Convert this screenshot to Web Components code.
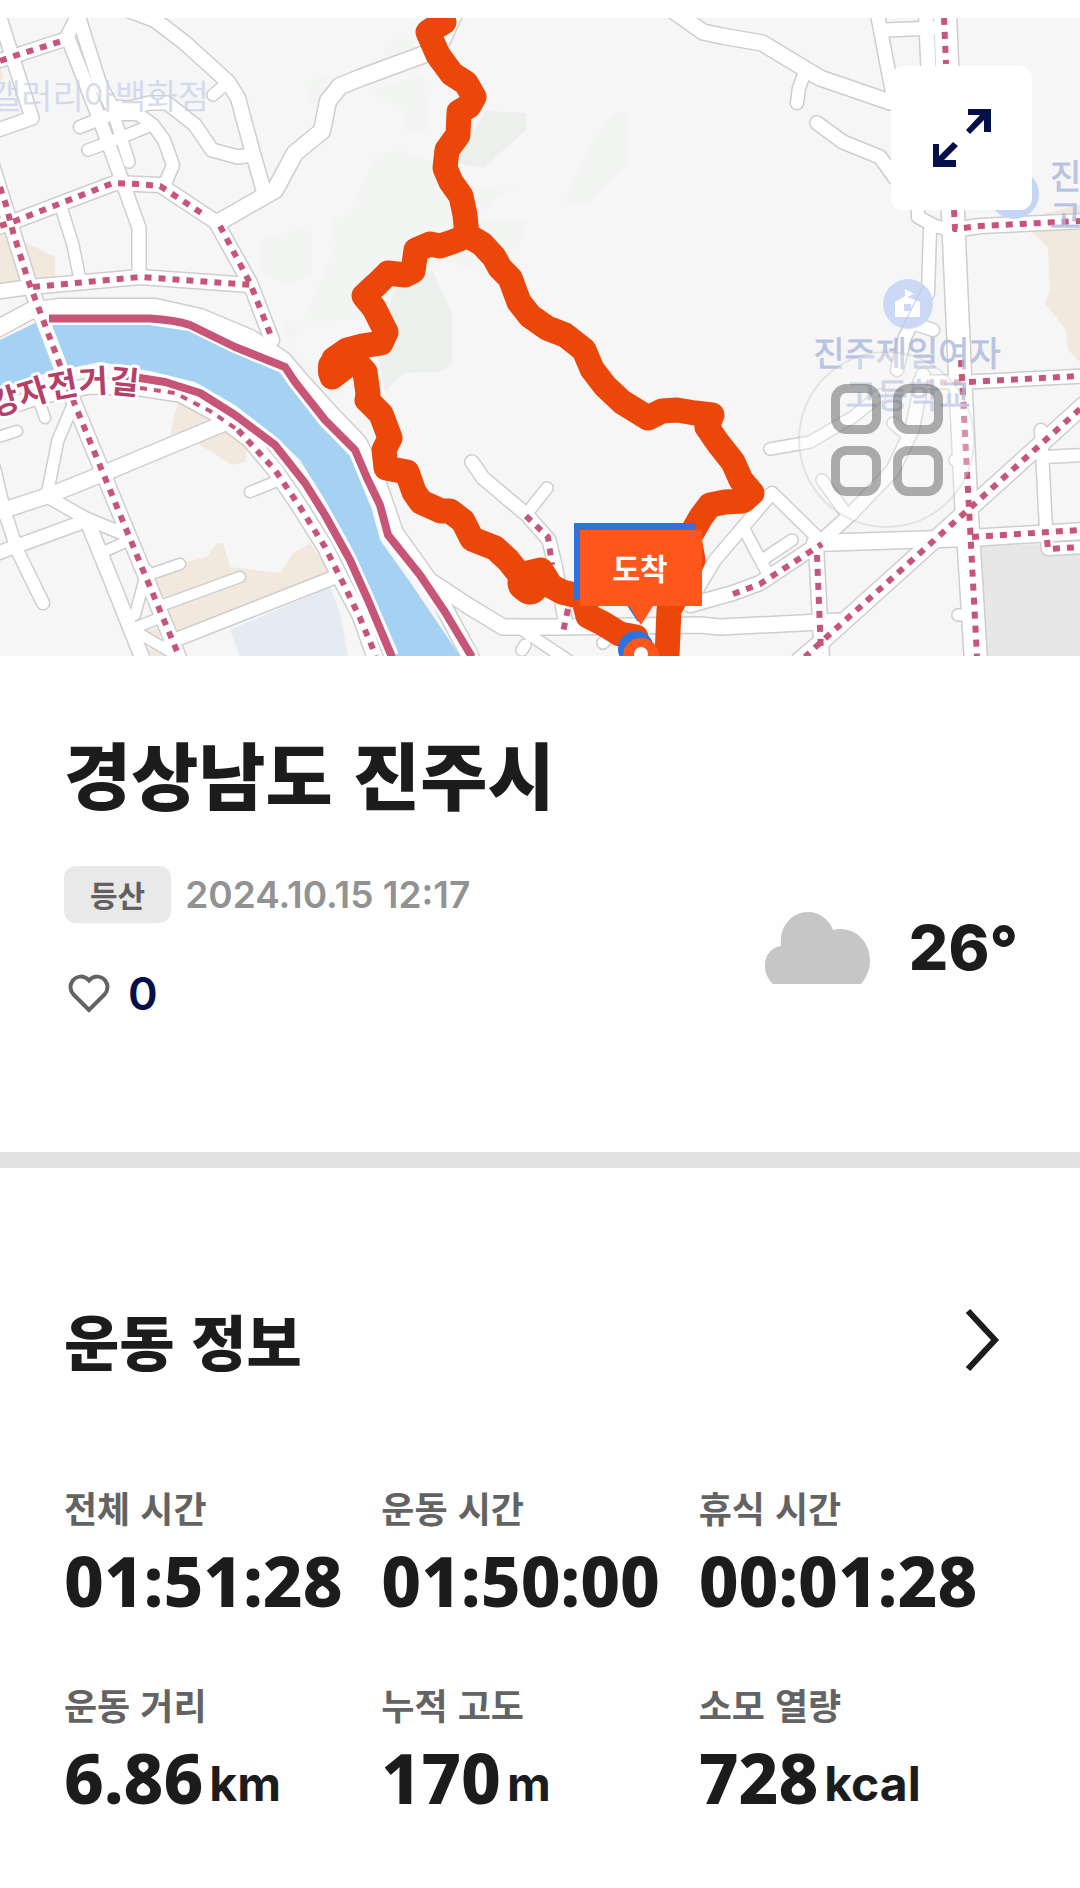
<!DOCTYPE html>
<html lang="ko">
<head>
<meta charset="utf-8">
<meta name="viewport" content="width=device-width, initial-scale=1">
<title>운동 기록</title>
<style>
  body { margin: 0; background: #fefefe; color: #1c1c1c; font-family: Inter, "Noto Sans CJK KR", sans-serif; }
</style>
</head>
<body>
<workout-page></workout-page>

<template id="t-page">
  <style>
    :host { display: block; padding-top: 18px; }
    hr { margin: 0; border: 0; height: 16px; background: #e2e2e2; }
  </style>
  <main>
    <route-map></route-map>
    <workout-summary></workout-summary>
    <hr>
    <workout-info></workout-info>
  </main>
</template>

<template id="t-map">
  <style>
    :host { display: block; position: relative; overflow: hidden; background: #f6f6f6; }
    svg { display: block; }
    .map { width: 100%; height: auto; font-family: "Noto Sans CJK KR", sans-serif; }
    .case path { fill: none; stroke: #cecece; stroke-linecap: round; stroke-linejoin: round; }
    .fill path { fill: none; stroke: #fff; stroke-linecap: round; stroke-linejoin: round; }
    .dots path { fill: none; stroke: #c75577; stroke-width: 6; stroke-dasharray: 7 7; stroke-linejoin: round; }
    .dots .thin { stroke-width: 4; }
    .poi { font-size: 34px; fill: #a9b7dd; fill-opacity: .75; stroke: #a9b7dd; stroke-opacity: .6; stroke-width: 1; }
    .poi .faint { fill: #c9d1ea; stroke: none; }
    button { position: absolute; border: 0; padding: 0; display: grid; place-items: center; cursor: pointer; }
    .expand { top: 48px; right: 48px; width: 141px; height: 144px; border-radius: 12px; background: #fff; }
    .menu { top: 333px; right: 105px; width: 177px; height: 177px; border-radius: 50%; border: 2px solid rgba(0,0,0,.08); background: rgba(248,248,248,.35); box-sizing: border-box; }
  </style>
  <svg class="map" viewBox="0 18 1080 638" role="img" aria-label="이동 경로 지도">
    <rect y="18" width="1080" height="638" fill="#f6f6f6"/>
    <g fill="#f1f4f1">
      <path d="M373 88L425 75L427 133L405 133L402 108L380 100ZM259 240L312 225V275L285 285L259 270ZM333 218L360 215V300L340 298L350 262L333 240ZM378 60L395 38L415 40V50ZM375 155L400 150L440 165L460 190L518 184L495 200L480 220H527L520 245L490 275L440 260L400 300L362 320L285 322V340L345 400L310 385L290 350ZM305 80L335 75L328 105L308 105Z" opacity=".55"/>
      <path d="M617 113H628V162L590 203H564L593 140Z"/>
      <path d="M397 287L432 270L452 313V363L440 372L403 373L385 392L375 340Z" fill="#ecf0ed"/>
      <path d="M485 111L526 113V130L483 168L457 163Z" fill="#ecefec"/>
    </g>
    <g fill="#f3e8dd">
      <path d="M0 233L27 243L55 257V277L33 280L0 287Z"/>
      <path d="M0 68L4 76L0 82Z"/>
      <path d="M178 402L213 420L170 437L173 420Z"/>
      <path d="M197 443L227 428L247 450L245 462L232 465L213 453Z"/>
      <path d="M155 580L183 563L207 557L217 543L223 543L230 567L280 573L293 553L310 543L330 573L177 633Z"/>
      <path d="M145 630L160 628V640ZM146 648L175 656H152Z"/>
      <path d="M1045 213L1080 205V362L1068 350L1066 330L1045 303L1050 290L1048 247L1033 233Z"/>
    </g>
    <path d="M230 630L330 587L340 613L348 656H240Z" fill="#e4ebf3"/>
    <path d="M980 546L1080 543V656H984Z" fill="#e7e7e7"/>
    <g class="case"></g>
    <g class="fill"></g>
    <path fill="#a5d1f2" d="M0 340L35 323L150 324L185 329L230 351L280 371L290 385L320 425L350 456L372 510L380 540L410 582L460 656H395L375 603L350 545L325 500L300 460L275 436L235 405L195 382L150 371L100 362L50 372L0 388Z"/>
    <g fill="none" stroke="#fff" stroke-linejoin="round">
      <path stroke-width="14" d="M48 318H150L190 324L235 346L285 367L295 382L325 420L355 450L367 478L380 505L388 535L420 575L445 612L472 656"/>
      <path stroke-width="14" d="M135 377L165 382L200 393L235 415L275 445L305 483L325 515L350 560L368 600L392 656"/>
      <path stroke-width="14" d="M38 308L72 397"/>
    </g>
    <g fill="none" stroke="#c75577" stroke-width="8" stroke-linejoin="round">
      <path d="M49 318.500H150Q175 320 190 325L235 347L285 367L295 382L325 420L355 450L367 478L380 505L388 535L420 575L445 612L472 657"/>
      <path d="M120 376L140 378L165 382L200 393L235 415L275 445L305 483L325 515L350 560L368 600L392 657"/>
    </g>
    <g class="dots">
      <path d="M0 61L14 56L62 41"/>
      <path d="M0 226L15 221L113 183L137 184L160 186L203 214"/>
      <path d="M220 226L250 283L271 336"/>
      <path d="M0 187L6 205L13 232L28 280L45 325L75 405L110 490L145 575L179 656"/>
      <path d="M33 287L140 277L254 285"/>
      <path class="thin" d="M140 388L175 393L210 411L238 430"/>
      <path d="M238 430L275 470L300 507L325 547L345 587L360 618L376 656"/>
      <path d="M944 18L946 64"/>
      <path d="M954 210L955 229L980 226L1080 221"/>
      <path d="M961 360L968 490L977 656"/>
      <path d="M969 382L1080 376"/>
      <path d="M1080 409L970 508L820 643L805 657"/>
      <path d="M972 537L1080 530M1047 540L1048 549L1080 547"/>
      <path d="M733 594L760 584L822 544M817 555L821 653"/>
      <path d="M526 516L548 537L552 565M568 609L563 632"/>
      <path d="M926 383L962 382" opacity=".4"/>
    </g>
    <g>
      <circle cx="908" cy="304" r="25" fill="#cbd9f6"/>
      <circle cx="1014" cy="194" r="25" fill="#c5d5f5"/>
      <path d="M895 302L905 296V289L914 294L907 297L920 302V317H895ZM904 304V311H911V304Z" fill="#fff" fill-rule="evenodd"/>
      <path d="M923 286L902 328" stroke="#bcc5d8" fill="none"/>
    </g>
    <g class="poi">
      <text class="faint" x="-10" y="109">갤러리아백화점</text>
      <text x="907" y="366" text-anchor="middle">진주제일여자</text>
      <text x="908" y="408" text-anchor="middle">고등학교</text>
      <text x="1050" y="189">진</text>
      <text x="1050" y="229">고</text>
    </g>
    <path id="curve" d="M-6 417L28 406Q60 395 90 393T150 398" fill="none"/>
    <text font-size="32" font-weight="700" fill="#b53f69" stroke="#fff" stroke-width="6" stroke-linejoin="round" paint-order="stroke"><textPath href="#curve">강자전거길</textPath></text>
    <g fill="none" stroke="#eb470a" stroke-width="25" stroke-linejoin="round" stroke-linecap="round">
      <path d="M444 22L428 32L438 55L452 74L466 83L474 97L469 106L459 112L458 135L447 150L445 168L451 182L461 196L465 215L467 235L482 244L494 257L500 268L510 278L519 302L530 316L547 328L565 335L574 342L584 350L592 369L605 386L622 402L648 418L662 411L677 410L695 413L712 415L707 427L718 443L733 462L741 480L752 493L743 501L725 502L710 505L701 517L689 538L693 560L680 590L669 610L667 656"/>
      <path d="M467 236L452 242L440 246L430 244L416 250L413 271L405 275L388 273L378 283L364 296L374 308L386 332L381 343L362 346L347 350L334 359L332 377L354 360L365 372L368 394L367 400L381 414L390 438L384 450L386 468L407 472L414 492L421 502L441 511L450 511L463 521L472 539L495 548L508 560L520 575L541 570L551 586L562 592L583 597L588 616L602 623L620 634L636 637"/>
      <path d="M526 583L530 586" stroke-width="37"/>
      <path d="M333 366L333 372" stroke-width="30"/>
    </g>
    <circle cx="636" cy="649" r="18" fill="#2b74df"/>
    <path d="M626 604L652 604L638 622Z" fill="#2b74df"/>
    <rect x="574" y="523" width="122" height="77" fill="#2b74df"/>
    <path d="M580 530H702V606H653L641 625L629 606H580Z" fill="#ff561c"/>
    <circle cx="641" cy="656" r="18" fill="#ff561c"/>
    <circle cx="641" cy="654" r="7" fill="#fff"/>
    <text x="640" y="580" text-anchor="middle" font-size="30" font-weight="700" fill="#fff">도착</text>
  </svg>
  <button class="menu" type="button" aria-label="메뉴">
    <svg width="112" height="112" viewBox="0 0 112 112" fill="none" stroke="#555" stroke-opacity=".48" stroke-width="9">
      <rect x="4.500" y="4.500" width="41" height="41" rx="11"/><rect x="66.500" y="4.500" width="41" height="41" rx="11"/>
      <rect x="4.500" y="66.500" width="41" height="41" rx="11"/><rect x="66.500" y="66.500" width="41" height="41" rx="11"/>
    </svg>
  </button>
  <button class="expand" type="button" aria-label="지도 확대">
    <svg width="58" height="58" viewBox="0 0 58 58" fill="#04104a">
      <path d="M35 0H58V23H51V11L37 25L33 21L47 6H35Z"/><path d="M0 35H6V47L20 33L25 37L11 51H23V58H0Z"/>
    </svg>
  </button>
</template>

<template id="t-summary">
  <style>
    :host { display: block; padding: 68px 62px 126px 64px; }
    h1 { margin: 0 0 46px; font: 900 73px/96px "Noto Sans CJK KR", sans-serif; }
    .row { display: flex; justify-content: space-between; align-items: center; }
    .meta { display: flex; align-items: center; gap: 14px; margin-bottom: 39px; }
    .tag { padding: 0 26px; border-radius: 12px; background: #e9e9e9; color: #606060; font: 700 30px/57px "Noto Sans CJK KR", sans-serif; }
    time { color: #929292; font-size: 37px; line-height: 56px; font-weight: 600; }
    .like { display: flex; align-items: center; gap: 18px; padding: 0 0 0 4px; border: 0; background: none; color: #04104a; font: 600 45px/64px Inter, sans-serif; cursor: pointer; }
    .weather { display: flex; align-items: center; gap: 38px; padding-top: 4px; font-size: 62px; line-height: 80px; font-weight: 800; }
    svg { display: block; }
  </style>
  <h1>경상남도 진주시</h1>
  <div class="row">
    <div>
      <div class="meta"><span class="tag">등산</span><time datetime="2024-10-15T12:17">2024.10.15 12:17</time></div>
      <button class="like" type="button" aria-label="좋아요 0">
        <svg width="42" height="40" viewBox="0 0 42 40" fill="none" stroke="#636363" stroke-width="4"><path d="M21 36L5.500 20.500C2 17 1.500 11 4.500 7C8.500 1.500 16 1 21 6.500C26 1 33.500 1.500 37.500 7C40.500 11 40 17 36.500 20.500Z"/></svg>
        <span>0</span>
      </button>
    </div>
    <div class="weather">
      <svg width="106" height="72" viewBox="0 0 106 72" role="img" aria-label="흐림"><path fill="#c6c6c6" d="M8 72C-6 59-1 36 16 34C14 14 27 0 43 0C54 0 64 7 68 18C88 13 105 28 105 49C105 58 101 66 96 72Z"/></svg>
      <span>26°</span>
    </div>
  </div>
</template>

<template id="t-info">
  <style>
    :host { display: block; padding: 132px 64px 60px; }
    header { display: flex; justify-content: space-between; align-items: center; margin-bottom: 103px; }
    h2 { margin: 0; font: 900 60px/80px "Noto Sans CJK KR", sans-serif; }
    a { display: block; padding: 8px 16px; color: inherit; }
    svg { display: block; }
    .grid { display: grid; grid-template-columns: repeat(3, 1fr); row-gap: 60px; }
  </style>
  <header>
    <h2>운동 정보</h2>
    <a href="#detail" aria-label="운동 정보 상세"><svg width="36" height="62" viewBox="0 0 36 62" fill="none" stroke="#1c1c1c" stroke-width="6"><path d="M4 2L31 31L4 60"/></svg></a>
  </header>
  <div class="grid">
    <stat-item label="전체 시간">01:51:28</stat-item>
    <stat-item label="운동 시간">01:50:00</stat-item>
    <stat-item label="휴식 시간">00:01:28</stat-item>
    <stat-item label="운동 거리" unit="km">6.86</stat-item>
    <stat-item label="누적 고도" unit="m">170</stat-item>
    <stat-item label="소모 열량" unit="kcal">728</stat-item>
  </div>
</template>

<template id="t-stat">
  <style>
    :host { display: flex; flex-direction: column; gap: 9px; white-space: nowrap; }
    .label { color: #636363; font: 700 36px/48px "Noto Sans CJK KR", sans-serif; }
    .value { display: flex; align-items: flex-end; gap: 6px; font: 800 69px/80px "Noto Sans", sans-serif; }
    .unit { font: 700 48px/66px Inter, sans-serif; }
    .unit:empty { display: none; }
  </style>
  <span class="label"></span>
  <span class="value"><span><slot></slot></span><span class="unit"></span></span>
</template>

<script>
  class TemplateElement extends HTMLElement {
    constructor() {
      super();
      this.attachShadow({ mode: 'open' })
        .append(document.getElementById(this.constructor.template).content.cloneNode(true));
    }
  }

  class StatItem extends TemplateElement {
    static template = 't-stat';
    connectedCallback() {
      this.shadowRoot.querySelector('.label').textContent = this.getAttribute('label');
      this.shadowRoot.querySelector('.unit').textContent = this.getAttribute('unit') || '';
    }
  }

  /* Each road: [inner width, path]. Outlines go down first so that junctions stay open. */
  const ROADS = [
    [13, 'M0 18L14 62L32 118L-5 131'],
    [13, 'M-5 62L14 56L66 39L78 15'],
    [13, 'M68 38L98 115L120 175L139 228V276'],
    [13, 'M77 12L100 85L112 107L130 108L150 103L167 103L195 125L212 150L238 157L252 155'],
    [12, 'M80 127L112 114L138 114L153 125L164 140L173 165L165 184'],
    [11, 'M88 150L112 141L152 125M115 118L129 162'],
    [14, 'M128 10L155 20L185 43L228 82L238 98L252 150L265 195'],
    [11, 'M213 95L228 82'],
    [16, 'M219 222L275 190L295 153L322 131L328 101L340 86L360 78L425 54L440 45L455 12'],
    [14, 'M-5 228L15 221L115 183L160 185L216 222L250 283L272 340'],
    [14, 'M-8 165L13 232L28 280L45 325L75 405L110 490L145 575L180 660'],
    [14, 'M-5 292L30 287L140 277L250 285'],
    [11, 'M62 210L73 245L79 275'],
    [16, 'M-5 330L30 311L60 307L155 307L200 317L250 338L283 360L300 380L330 413L358 442L375 475L395 533L432 585L470 656'],
    [15, 'M432 582L470 607L503 627H560L700 625L720 627L840 621'],
    [15, 'M-5 411L40 396L90 386L140 388L180 394L215 413L250 440L275 470L300 507L325 547L345 587L360 615L376 660'],
    [15, 'M-5 513L50 495L107 472L227 422'],
    [13, 'M-5 554L80 523'],
    [12, 'M-6 468L4 510L18 552L43 603'],
    [11, 'M73 405L58 440L48 490'],
    [12, 'M48 497L85 518L124 534'],
    [14, 'M88 523L110 577L143 660'],
    [10, 'M103 552L128 541M147 570L135 615M137 627L162 617M140 634L176 655'],
    [10, 'M-5 438L17 431M45 418L38 398'],
    [10, 'M250 492L282 479M180 564L148 575M240 577L163 605'],
    [13, 'M170 642L335 577'],
    [15, 'M665 5L703 32L722 36L762 43L820 78L890 102'],
    [12, 'M803 77L799 88L797 103'],
    [13, 'M817 123L843 142L880 157L895 178'],
    [13, 'M877 12L893 95M885 30L935 28'],
    [14, 'M926 12L929 80'],
    [22, 'M945 12L953 215L958 330L966 500L976 662'],
    [14, 'M953 230L980 226L1085 221'],
    [12, 'M918 206V217L935 226L950 230M930 230L928 293L905 337L897 370M918 325L933 330'],
    [13, 'M920 382L968 382L1085 376'],
    [16, 'M1085 404L970 508L820 643L800 660'],
    [16, 'M815 543L970 538L1085 531'],
    [14, 'M690 605L733 593L760 583L820 543'],
    [14, 'M816 545L822 660'],
    [13, 'M822 540L850 515L893 470L912 430L923 375'],
    [11, 'M822 480L845 512M770 449L810 442L853 417L880 395M893 423L907 435'],
    [12, 'M697 590L715 560L772 493L823 543'],
    [11, 'M743 527L755 550L767 572M792 540L765 558'],
    [12, 'M1041 430L1046 530L1048 549L1085 547M1043 457L1085 455'],
    [11, 'M958 615H972M955 460H965'],
    [13, 'M472 462L483 478L527 515L549 540L555 565L566 625'],
    [11, 'M547 488L528 512'],
    [11, 'M515 625L575 665M525 645L522 650M603 643L615 630']
  ];

  class RouteMap extends TemplateElement {
    static template = 't-map';
    connectedCallback() {
      const draw = (selector, extra) => {
        const layer = this.shadowRoot.querySelector(selector);
        for (const [width, d] of ROADS) {
          const path = document.createElementNS('http://www.w3.org/2000/svg', 'path');
          path.setAttribute('d', d);
          path.setAttribute('stroke-width', width + extra);
          layer.append(path);
        }
      };
      draw('.case', 3);
      draw('.fill', 0);
    }
  }

  customElements.define('stat-item', StatItem);
  customElements.define('route-map', RouteMap);
  customElements.define('workout-summary', class extends TemplateElement { static template = 't-summary'; });
  customElements.define('workout-info', class extends TemplateElement { static template = 't-info'; });
  customElements.define('workout-page', class extends TemplateElement { static template = 't-page'; });
</script>
</body>
</html>
